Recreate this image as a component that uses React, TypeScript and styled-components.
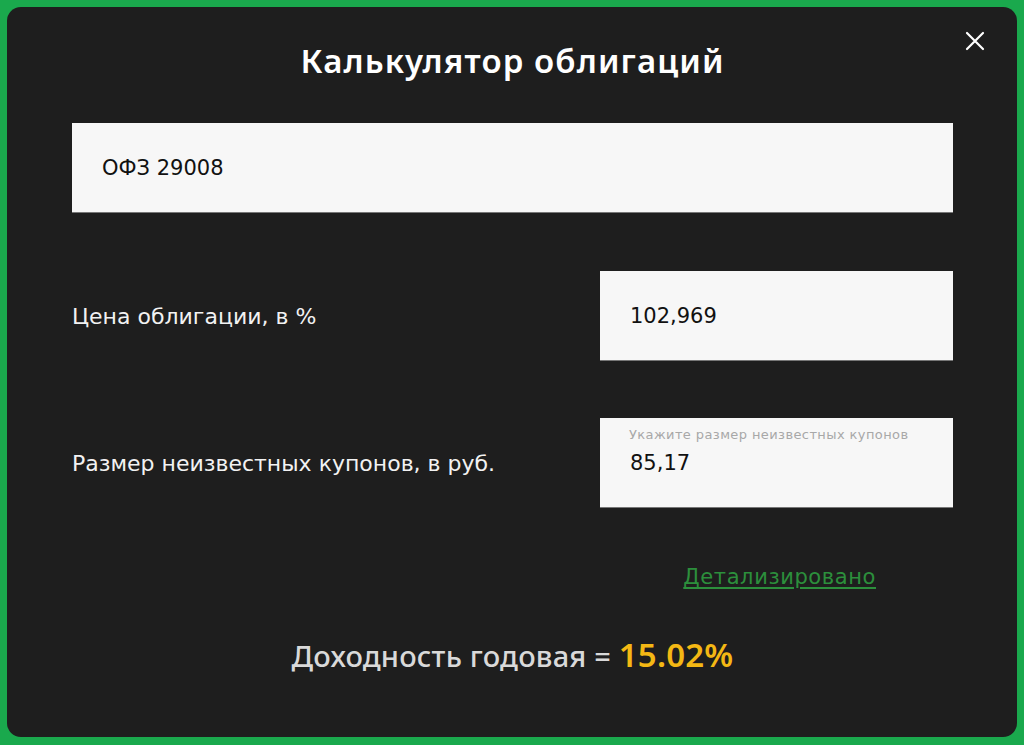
import React from "react";
import styled, { createGlobalStyle } from "styled-components";

const Global = createGlobalStyle`
  html, body { margin: 0; padding: 0; }
  body {
    background: #1aa94d;
    font-family: "DejaVu Sans", "Noto Sans", sans-serif;
  }
  * { box-sizing: border-box; }
`;

const Page = styled.div`
  width: 1024px;
  height: 745px;
  padding: 7px 7px 8px 7px;
`;

const Modal = styled.div`
  position: relative;
  height: 100%;
  background: #1e1e1e;
  border-radius: 14px;
  padding: 34px 64px 0 65px;
  display: flex;
  flex-direction: column;
`;

const Close = styled.button`
  position: absolute;
  top: 20px;
  right: 28px;
  width: 28px;
  height: 28px;
  padding: 0;
  border: none;
  background: transparent;
  display: flex;
  align-items: center;
  justify-content: center;
  cursor: pointer;
`;

const Title = styled.h1`
  margin: 0;
  text-align: center;
  color: #ffffff;
  font-family: "Noto Sans", sans-serif;
  font-size: 33px;
  line-height: 40px;
  font-weight: 600;
  letter-spacing: 1.1px;
`;

const Field = styled.div<{ $mt: number }>`
  margin-top: ${(p) => p.$mt}px;
  height: 90px;
  background: #f7f7f7;
  border-bottom: 1px solid #777;
  display: flex;
  flex-direction: column;
  justify-content: center;
  padding-left: 30px;
  position: relative;
`;

const Value = styled.span`
  color: #111;
  font-size: 21px;
`;

const Hint = styled.span`
  position: absolute;
  top: 9px;
  left: 29px;
  color: #a8a8a8;
  font-size: 13px;
  letter-spacing: 0.4px;
`;

const Row = styled.div<{ $mt: number }>`
  margin-top: ${(p) => p.$mt}px;
  display: flex;
  align-items: center;
  justify-content: space-between;
`;

const Label = styled.span`
  color: #f2f2f2;
  font-size: 22px;
`;

const SmallField = styled(Field)`
  margin-top: 0;
  width: 353px;
`;

const LinkRow = styled.div`
  margin-top: 57px;
  display: flex;
  justify-content: flex-end;
  padding-right: 77px;
`;

const DetailLink = styled.a`
  color: #2c8f3c;
  font-size: 21px;
  letter-spacing: 0.6px;
  text-decoration: underline;
  text-underline-offset: 3px;
  cursor: pointer;
`;

const Result = styled.div`
  margin-top: 43px;
  text-align: center;
  color: #d9d9d9;
  font-family: "Noto Sans", sans-serif;
  font-size: 29px;
  font-weight: 500;
  letter-spacing: 0.2px;
`;

const Yield = styled.span`
  color: #f4b814;
  font-size: 33px;
  font-weight: 600;
`;

export default function App() {
  return (
    <>
      <Global />
      <Page>
        <Modal>
          <Close aria-label="close">
            <svg width="20" height="20" viewBox="0 0 20 20">
              <path d="M2 2 L18 18 M18 2 L2 18" stroke="#fff" strokeWidth="2.2" strokeLinecap="round" />
            </svg>
          </Close>
          <Title>Калькулятор облигаций</Title>
          <Field $mt={42}>
            <Value>ОФЗ 29008</Value>
          </Field>
          <Row $mt={58}>
            <Label>Цена облигации, в %</Label>
            <SmallField $mt={0}>
              <Value>102,969</Value>
            </SmallField>
          </Row>
          <Row $mt={57}>
            <Label>Размер неизвестных купонов, в руб.</Label>
            <SmallField $mt={0}>
              <Hint>Укажите размер неизвестных купонов</Hint>
              <Value>85,17</Value>
            </SmallField>
          </Row>
          <LinkRow>
            <DetailLink>Детализировано</DetailLink>
          </LinkRow>
          <Result>
            Доходность годовая = <Yield>15.02%</Yield>
          </Result>
        </Modal>
      </Page>
    </>
  );
}
